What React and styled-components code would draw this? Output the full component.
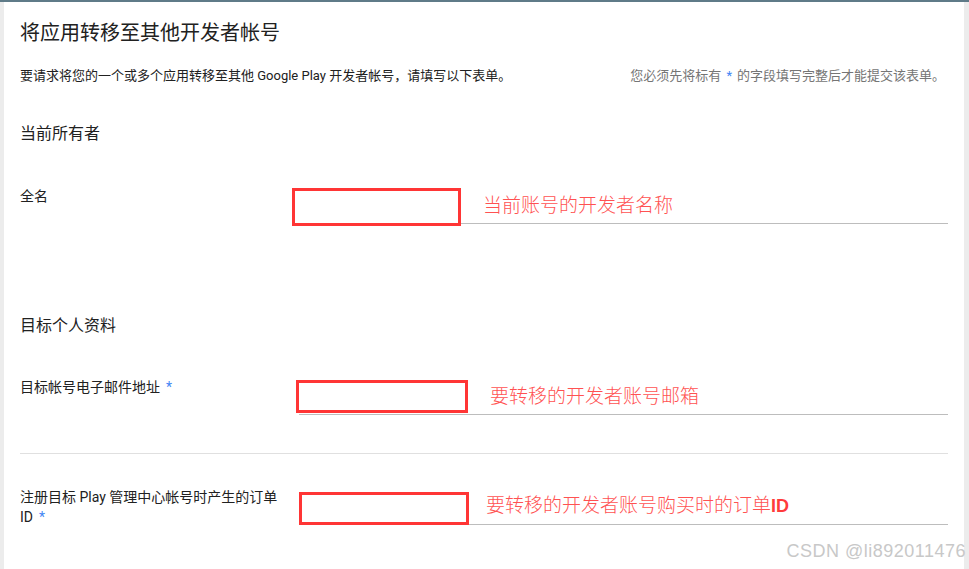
import React from "react";
import styled, { createGlobalStyle } from "styled-components";

const Global = createGlobalStyle`
  html, body { margin: 0; padding: 0; }
  body {
    background: #ececec;
    font-family: Roboto, "Noto Sans CJK SC", "Noto Sans", sans-serif;
    color: #212121;
  }
  * { box-sizing: border-box; }
`;

const Page = styled.div`
  position: relative;
  min-height: 100vh;
  border-top: 2px solid #5f7b88;
  background: #ececec;
  padding: 0 5px 0 4px;
  display: flex;
`;

const Panel = styled.main`
  flex: 1;
  background: #ffffff;
  padding: 17px 16px 40px 16px;
`;

const Title = styled.h1`
  margin: 0;
  font-size: 20px;
  line-height: 28px;
  font-weight: 400;
  color: #212121;
`;

const Intro = styled.div`
  display: flex;
  justify-content: space-between;
  margin-top: 19px;
  font-size: 13px;
  line-height: 20px;
`;

const IntroText = styled.span`
  color: #212121;
`;

const Note = styled.span`
  color: #757575;
  padding-right: 3px;
`;

const Star = styled.span`
  color: #4285f4;
  margin: 0 ${(p) => p.$after || 0}px 0 ${(p) => p.$before || 6}px;
`;

const SectionTitle = styled.h2`
  margin: ${(p) => p.$top}px 0 0 0;
  font-size: 16px;
  line-height: 24px;
  font-weight: 400;
  color: #212121;
`;

const Row = styled.div`
  display: grid;
  grid-template-columns: 263px 1fr;
  column-gap: 16px;
  margin-top: ${(p) => p.$top}px;
  align-items: start;
`;

const Label = styled.div`
  font-size: 14px;
  line-height: 20px;
  color: #212121;
`;

const Field = styled.div`
  display: flex;
  align-items: center;
  height: 38px;
  border-bottom: 1px solid #bdbdbd;
`;

const Mark = styled.div`
  flex-shrink: 0;
  align-self: flex-start;
  width: ${(p) => p.$w}px;
  height: ${(p) => p.$h}px;
  margin-left: ${(p) => p.$x}px;
  margin-top: ${(p) => p.$y}px;
  border: 3px solid #ff3535;
`;

const Annotation = styled.span`
  margin-left: ${(p) => p.$gap}px;
  margin-top: -2px;
  font-family: "Noto Sans CJK SC", sans-serif;
  font-weight: 300;
  font-size: 19px;
  line-height: 24px;
  color: #ff5252;
  white-space: nowrap;
`;

const Latin = styled.span`
  font-family: "Liberation Sans", Arial, sans-serif;
  font-weight: 700;
  font-size: 18px;
  color: #ff3b3b;
`;

const Divider = styled.hr`
  margin: 38px 0 0 0;
  border: 0;
  border-top: 1px solid #e0e0e0;
  height: 0;
`;

const Watermark = styled.div`
  position: absolute;
  right: 3px;
  bottom: 9px;
  font-family: "Liberation Sans", Arial, sans-serif;
  font-size: 18px;
  line-height: 18px;
  letter-spacing: 0.5px;
  color: #c8c8c8;
  pointer-events: none;
`;

function FormRow({ label, required, top, mark, gap, children }) {
  return (
    <Row $top={top}>
      <Label>
        {label}
        {required && <Star>*</Star>}
      </Label>
      <Field>
        <Mark $x={mark.x} $y={mark.y} $w={mark.w} $h={mark.h} />
        <Annotation $gap={gap}>{children}</Annotation>
      </Field>
    </Row>
  );
}

export default function App() {
  return (
    <>
      <Global />
      <Page>
        <Panel>
          <Title>将应用转移至其他开发者帐号</Title>
          <Intro>
            <IntroText>
              要请求将您的一个或多个应用转移至其他 Google Play 开发者帐号，请填写以下表单。
            </IntroText>
            <Note>
              您必须先将标有<Star $before={5} $after={5}>*</Star>的字段填写完整后才能提交该表单。
            </Note>
          </Intro>

          <SectionTitle $top={36}>当前所有者</SectionTitle>
          <FormRow label="全名" top={40} mark={{ x: -7, y: 2, w: 169, h: 38 }} gap={22}>
            当前账号的开发者名称
          </FormRow>

          <SectionTitle $top={90}>目标个人资料</SectionTitle>
          <FormRow
            label="目标帐号电子邮件地址"
            required
            top={39}
            mark={{ x: -3, y: 3, w: 172, h: 33 }}
            gap={22}
          >
            要转移的开发者账号邮箱
          </FormRow>

          <Divider />

          <FormRow
            label="注册目标 Play 管理中心帐号时产生的订单 ID"
            required
            top={33}
            mark={{ x: 0, y: 5, w: 170, h: 33 }}
            gap={17}
          >
            要转移的开发者账号购买时的订单<Latin>ID</Latin>
          </FormRow>
        </Panel>
        <Watermark>CSDN @li892011476</Watermark>
      </Page>
    </>
  );
}
